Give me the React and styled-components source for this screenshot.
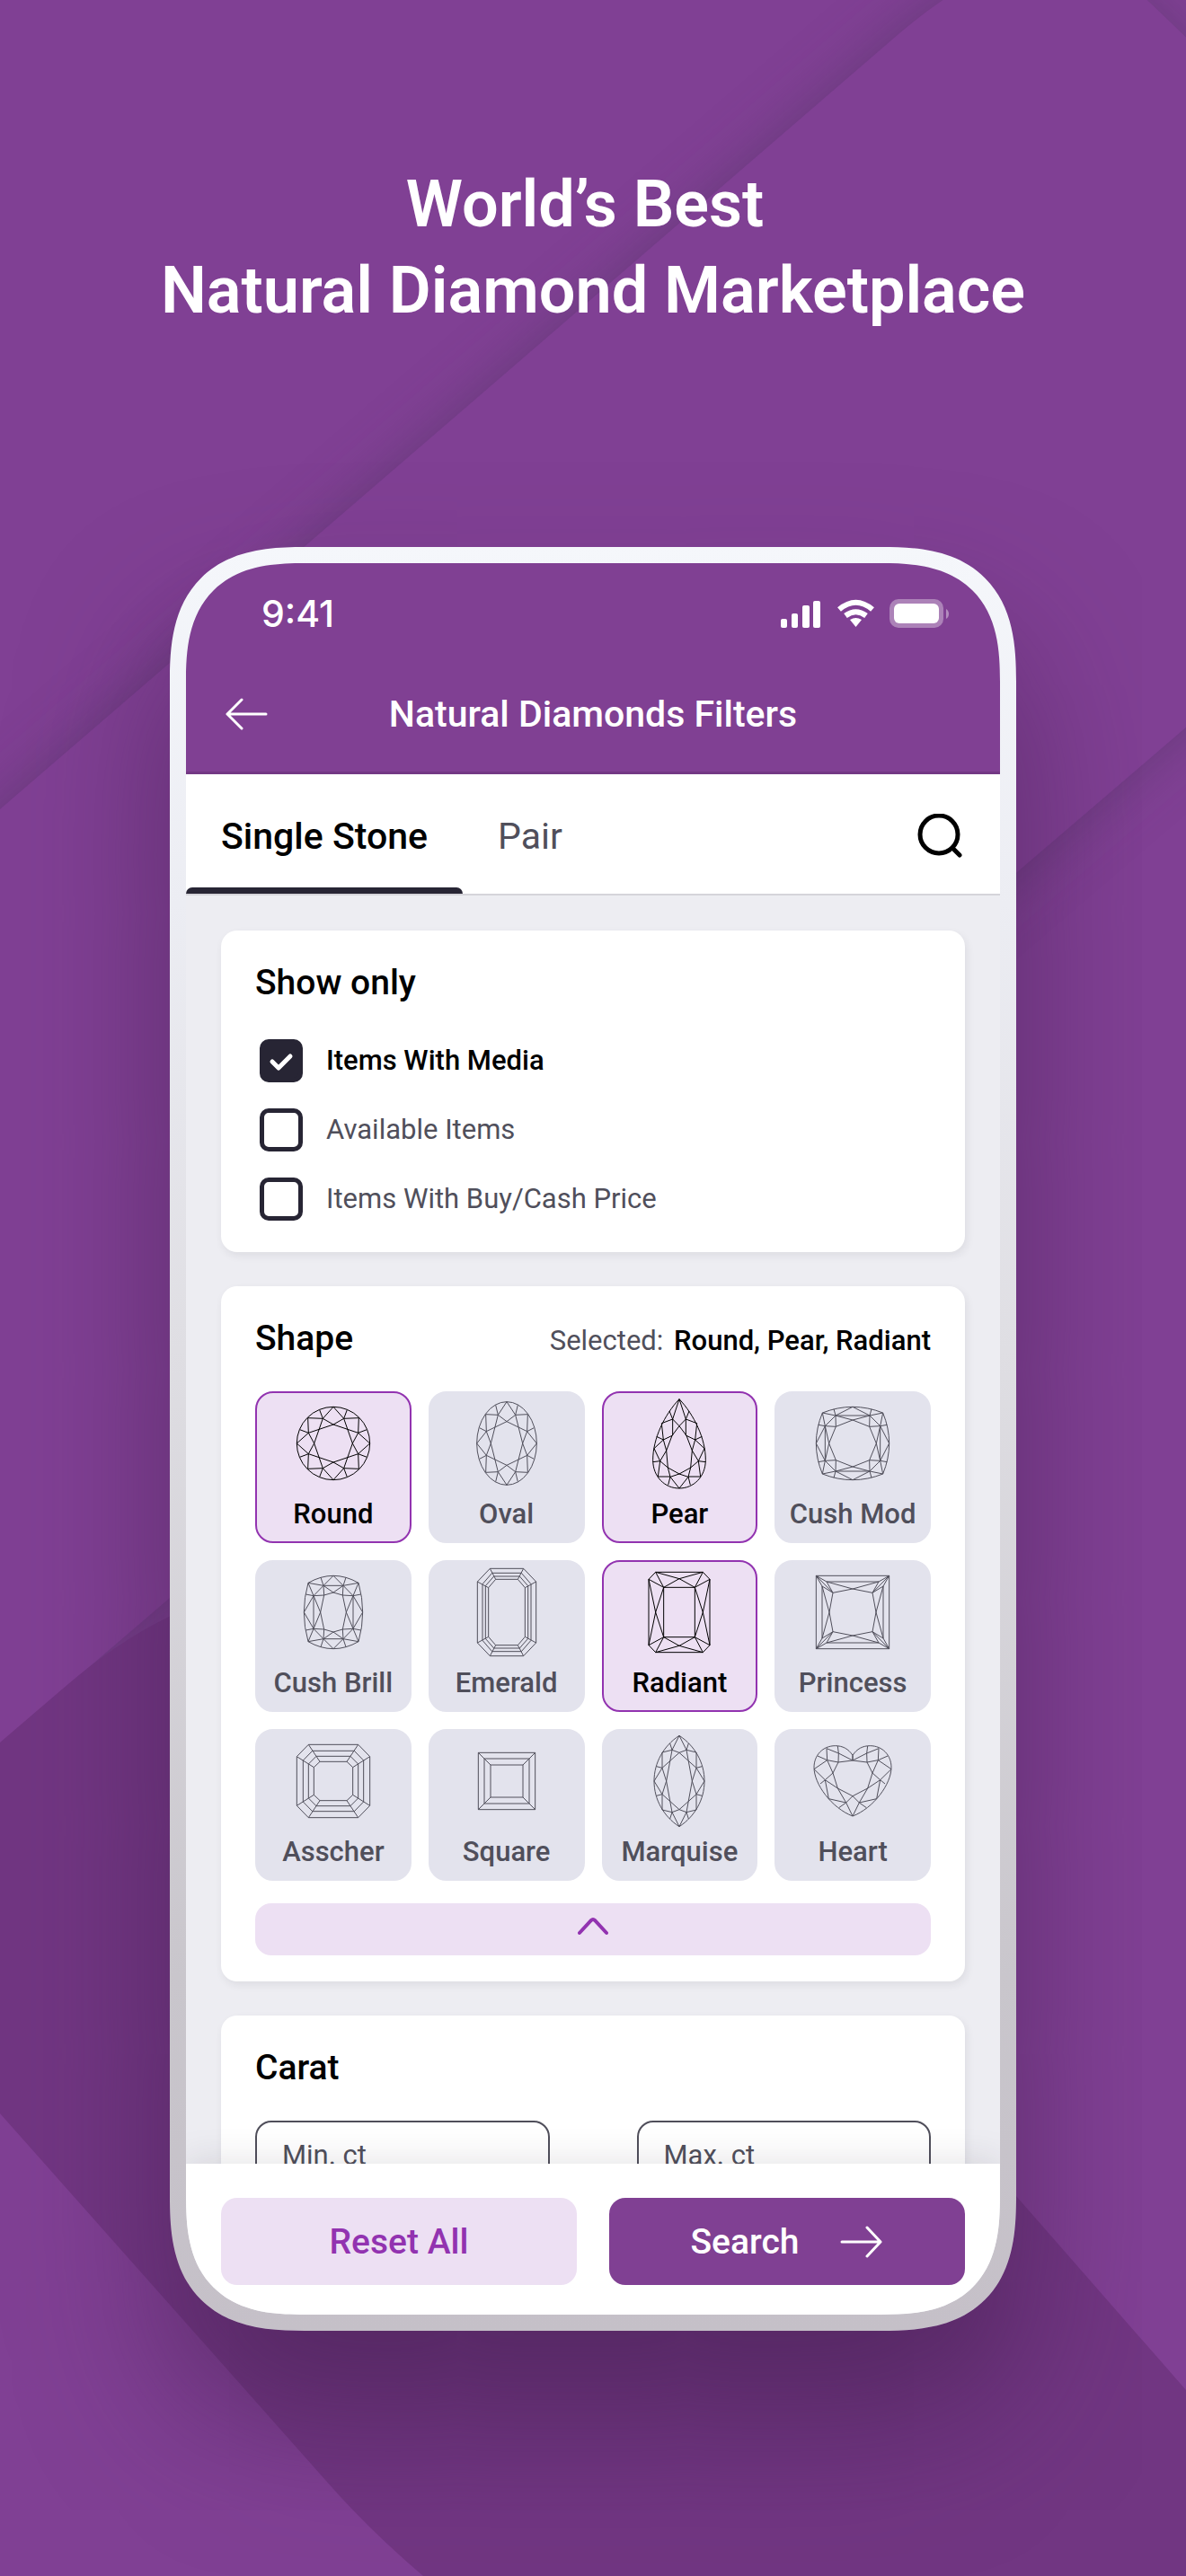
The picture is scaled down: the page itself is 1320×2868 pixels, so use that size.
import React, { useState } from "react";
import styled, { createGlobalStyle } from "styled-components";

const colors = {
  purple: "#804093",
  accent: "#9233b0",
  lilac: "#ede0f3",
  ink: "#272534",
  grey: "#504f5b",
  tile: "#e3e3ed",
  page: "#ededf2",
};

// one quarter of every symmetric cut, mirrored to all four corners
const cushion = (x, y, top, side) =>
  `M0 ${top}Q${x / 2} ${top} ${x} ${y}Q${side} ${y / 2} ${side} 0`;

const SHAPES = [
  {
    name: "Round",
    quarter:
      "M0 122A122 122 0 0 0 122 0M0 122L35 83L85 85L83 35L122 0M35 83L46 112M83 35L112 46M35 83L0 63L83 35M35 83L64 0L83 35",
  },
  {
    name: "Oval",
    quarter:
      "M0 139A100 139 0 0 0 100 0M0 139L29 95L70 97L68 40L100 0M29 95L37 128M68 40L91 52M29 95L0 73L68 40M29 95L53 0L68 40",
  },
  {
    name: "Pear",
    half:
      "M0-148C50-95 88-15 88 55C88 112 48 150 0 150M0-148L22-81L33-108M22-81L59-67L53-12L76-23M0-58L22-81V-27L53-12L84 17L64 59L88 62M0-58L24-26L43 24L53-12M43 24L64 59L71 111H30L37 139M64 59L38 81L0 102L30 112L0 150M43 24L38 81L30 112",
  },
  {
    name: "Cush Mod",
    quarter:
      cushion(101, 102, 122, 122) +
      "M0 122L57 93L101 102L92 58L122 0M57 93L63 115M92 58L115 62M57 93L92 58M0 93H57L56 56L92 58V0M57 93L0 78L56 56M92 58L79 0L56 56",
  },
  {
    name: "Cush Brill",
    quarter:
      cushion(84, 98, 122, 98) +
      "M0 122L33 89L84 98L66 55L98 0M33 89L42 116M66 55L92 60M33 89L66 55M0 89H33L31 57L66 55V0M33 89L0 66L31 57M66 55L43 0L31 57",
  },
  {
    name: "Emerald",
    quarter:
      "M0 146H56L98 102V0M0 131H49L81 94V0M0 120H43L71 88V0M0 110H37L61 82V0M56 146L37 110M98 102L61 82",
  },
  {
    name: "Radiant",
    quarter:
      "M0 134H79L102 110V0M0 83H52V0M0 112L79 134L52 83L102 110L79 0M0 112L52 83L79 0",
  },
  {
    name: "Princess",
    quarter:
      "M0 122H122V0M0 102H87L122 122L102 87V0M122 122L66 65L87 102L0 78L66 65L102 87L78 0L66 65",
  },
  {
    name: "Asscher",
    quarter:
      "M0 122H83L122 82V0M0 101H70L101 69V0M0 83H57L83 57V0M0 65H45L65 46V0M83 122L45 65M122 82L65 46",
  },
  { name: "Square", quarter: "M0 95H95V0M0 75H75V0M0 54H54V0M95 95L54 54" },
  {
    name: "Marquise",
    quarter:
      "M0 152C52 118 84 62 84 0M0 152L24 104L57 96V44L84 0M24 104L31 126M57 44L76 49M24 104L0 95L57 44M24 104L43 0L57 44",
  },
  {
    name: "Heart",
    half:
      "M0-86C14-108 34-118 58-118C100-118 129-86 129-46C129 10 70 90 0 117M0-86V-69L47-93L87-109L85-70L117-84M50-117L47-93L48-63M0-69L48-63L85-70L129-40L92-4L108 9M85-70L66-27L48-63M66-27L92-4L80 59L22 72L46 89M66-27L50 24L22 72L0 50L50 24L92-4M22 72L0 117",
  },
];

const TABS = ["Single Stone", "Pair"];

const FILTERS = ["Items With Media", "Available Items", "Items With Buy/Cash Price"];

const ShapeIcon = ({ quarter, half }) => (
  <Gem viewBox="-150 -168 300 336" aria-hidden="true">
    <path d={quarter || half} />
    <path d={quarter || half} transform="scale(-1 1)" />
    {quarter && <path d={quarter} transform="scale(1 -1)" />}
    {quarter && <path d={quarter} transform="scale(-1 -1)" />}
  </Gem>
);

const Backdrop = () => (
  <BackdropSvg viewBox="0 0 1320 2868" preserveAspectRatio="none" aria-hidden="true">
    <defs>
      <filter id="soft" x="-20%" y="-20%" width="140%" height="140%">
        <feGaussianBlur stdDeviation="32" />
      </filter>
    </defs>
    <rect width="1320" height="2868" fill="#804094" />
    <path
      d="M-300 1160L1000 38Q1160 -100 1290 16L1420 160Q1500 655 1320 810L0 1941Z"
      fill="#4d3560"
      opacity="0.5"
      filter="url(#soft)"
    />
    <path
      d="M-300 1160L1000 38Q1140 -82 1240 -34Q1300 20 1440 160V707L0 1941H-300Z"
      fill="#804094"
    />
    <path
      d="M0 1940L70 1880Q130 1828 188 1800Q500 1680 760 2020L1131 2445L1320 2661V2868H471Q410 2816 362 2761L0 2353Z"
      fill="#713682"
    />
  </BackdropSvg>
);

const App = () => {
  const [tab, setTab] = useState("Single Stone");
  const [checked, setChecked] = useState(["Items With Media"]);
  const [selected, setSelected] = useState(["Round", "Pear", "Radiant"]);

  const toggle = (list, item) =>
    list.includes(item) ? list.filter((i) => i !== item) : [...list, item];

  const selectedNames = SHAPES.map((s) => s.name).filter((n) => selected.includes(n));

  return (
    <Page>
      <GlobalStyle />
      <Backdrop />
      <Headline>
        {"World’s Best \nNatural Diamond Marketplace"}
      </Headline>

      <Phone>
        <Screen>
          <Header>
            <StatusBar>
              <span>9:41</span>
              <StatusIcons viewBox="0 0 188 32" aria-hidden="true">
                <rect x="0" y="22" width="7" height="10" rx="2" />
                <rect x="12" y="16" width="7" height="16" rx="2" />
                <rect x="24" y="7" width="8" height="25" rx="2" />
                <rect x="36" y="2" width="8" height="30" rx="2" />
                <path d="M77 23Q83.500 19 90 23L83.500 31Z" />
                <path className="arc" d="M72 18.500Q83.500 10 95 18.500" />
                <path className="arc" d="M65 11.500Q83.500 -4 102 11.500" />
                <rect x="121" y="0" width="60" height="32" rx="10" opacity="0.35" />
                <rect x="126" y="5" width="50" height="22" rx="6" />
                <path d="M184 11Q187 13 187 16.500T184 22Z" opacity="0.4" />
              </StatusIcons>
            </StatusBar>
            <TitleBar>
              <IconButton type="button" aria-label="Back">
                <LineIcon viewBox="0 0 48 36">
                  <path d="M46 18H3M19 2L3 18L19 34" />
                </LineIcon>
              </IconButton>
              <Title>Natural Diamonds Filters</Title>
            </TitleBar>
          </Header>

          <Tabs>
            {TABS.map((name) => (
              <Tab key={name} type="button" $active={tab === name} onClick={() => setTab(name)}>
                {name}
              </Tab>
            ))}
            <SearchButton type="button" aria-label="Search">
              <SearchIcon viewBox="0 0 50 50">
                <circle cx="24" cy="23" r="21" />
                <path d="M39 38L47 46" />
              </SearchIcon>
            </SearchButton>
          </Tabs>

          <Content>
            <Card>
              <CardTitle>Show only</CardTitle>
              <CheckList>
                {FILTERS.map((name) => (
                  <CheckRow key={name} $checked={checked.includes(name)}>
                    <CheckBox>
                      <input
                        type="checkbox"
                        checked={checked.includes(name)}
                        onChange={() => setChecked(toggle(checked, name))}
                      />
                      <svg viewBox="0 0 48 48">
                        <path d="M14 25L21 32L34 19" />
                      </svg>
                    </CheckBox>
                    {name}
                  </CheckRow>
                ))}
              </CheckList>
            </Card>

            <Card>
              <CardHead>
                <CardTitle>Shape</CardTitle>
                <Selected>
                  Selected: <strong>{selectedNames.join(", ")}</strong>
                </Selected>
              </CardHead>
              <ShapeGrid>
                {SHAPES.map((shape) => (
                  <Tile
                    key={shape.name}
                    type="button"
                    aria-pressed={selected.includes(shape.name)}
                    $active={selected.includes(shape.name)}
                    onClick={() => setSelected(toggle(selected, shape.name))}
                  >
                    <ShapeIcon {...shape} />
                    {shape.name}
                  </Tile>
                ))}
              </ShapeGrid>
              <Collapse type="button" aria-label="Show less">
                <svg viewBox="0 0 34 20">
                  <path d="M2 17L15 3Q17 1 19 3L32 17" />
                </svg>
              </Collapse>
            </Card>

            <Card>
              <CardTitle>Carat</CardTitle>
              <Range>
                <CaratInput placeholder="Min. ct" aria-label="Min. ct" />
                <CaratInput placeholder="Max. ct" aria-label="Max. ct" />
              </Range>
            </Card>
          </Content>

          <Footer>
            <Button type="button" onClick={() => setSelected([])}>
              Reset All
            </Button>
            <Button type="button" $primary>
              Search
              <LineIcon viewBox="0 0 48 36">
                <path d="M2 18H45M30 2L45 18L30 34" />
              </LineIcon>
            </Button>
          </Footer>
        </Screen>
      </Phone>
    </Page>
  );
};

const GlobalStyle = createGlobalStyle`
  * {
    box-sizing: border-box;
  }
  body {
    margin: 0;
    font-family: Roboto, "Liberation Sans", sans-serif;
  }
  button, input {
    font-family: inherit;
    margin: 0;
  }
  button {
    border: none;
    background: none;
    padding: 0;
    cursor: pointer;
  }
`;

const Page = styled.main`
  position: relative;
  height: 100vh;
  display: flex;
  flex-direction: column;
  padding: 180px 189px 273px;
  overflow: hidden;
`;

const BackdropSvg = styled.svg`
  position: absolute;
  inset: 0;
  width: 100%;
  height: 100%;
  z-index: -1;
`;

const Headline = styled.h1`
  margin: 0 -100px 237px;
  color: #fff;
  font-size: 72px;
  font-weight: 600;
  line-height: 96px;
  text-align: center;
  white-space: break-spaces;
`;

const Phone = styled.div`
  flex: 1;
  min-height: 0;
  padding: 18px;
  border-radius: 122px;
  background: linear-gradient(#f5f7fb, #ecedf3 20%, #dfdee3 45%, #c9c6cc 80%, #c5c0c8);
  box-shadow: 0 96px 160px rgba(66, 30, 78, 0.6);

  @supports (corner-shape: squircle) {
    border-radius: 150px;
    corner-shape: superellipse(1.4);
  }
`;

const Screen = styled.div`
  height: 100%;
  display: flex;
  flex-direction: column;
  overflow: hidden;
  border-radius: 104px;
  background: ${colors.page};

  @supports (corner-shape: squircle) {
    border-radius: 132px;
    corner-shape: superellipse(1.4);
  }
`;

const Header = styled.header`
  color: #fff;
  background: ${colors.purple};
  border-bottom: 3px solid #733884;
`;

const StatusBar = styled.div`
  display: flex;
  align-items: center;
  justify-content: space-between;
  height: 112px;
  padding: 0 56px 0 84px;
  font-family: Inter, sans-serif;
  font-size: 41px;
  font-weight: 500;
`;

const StatusIcons = styled.svg`
  width: 188px;
  height: 32px;
  fill: #fff;

  .arc {
    fill: none;
    stroke: #fff;
    stroke-width: 6;
  }
`;

const TitleBar = styled.div`
  display: grid;
  grid-template-columns: 1fr auto 1fr;
  align-items: center;
  height: 120px;
  padding: 0 43px 8px;
`;

const IconButton = styled.button`
  justify-self: start;
  display: flex;
`;

const LineIcon = styled.svg`
  width: 48px;
  height: 36px;
  fill: none;
  stroke: #fff;
  stroke-width: 3;
  stroke-linecap: round;
  stroke-linejoin: round;
`;

const Title = styled.h2`
  margin: 0;
  font-size: 41px;
  font-weight: 500;
`;

const Tabs = styled.nav`
  display: flex;
  height: 135px;
  background: #fff;
  border-bottom: 2px solid #d5d4da;
`;

const Tab = styled.button`
  position: relative;
  padding: 4px 39px 0;
  font-size: 41px;
  font-weight: ${({ $active }) => ($active ? 500 : 400)};
  color: ${({ $active }) => ($active ? "#000" : colors.grey)};

  &::after {
    content: "";
    display: ${({ $active }) => ($active ? "block" : "none")};
    position: absolute;
    inset: auto 0 0;
    height: 7px;
    border-radius: 8px 8px 0 0;
    background: ${colors.ink};
  }
`;

const SearchButton = styled.button`
  display: flex;
  align-items: center;
  margin-left: auto;
  padding: 4px 42px 0 0;
`;

const SearchIcon = styled.svg`
  width: 50px;
  height: 50px;
  fill: none;
  stroke: #000;
  stroke-width: 5;
  stroke-linecap: round;
`;

const Content = styled.div`
  flex: 1;
  min-height: 0;
  display: flex;
  flex-direction: column;
  gap: 38px;
  padding: 39px;
  overflow-y: auto;
  scrollbar-width: none;
`;

const Card = styled.section`
  flex: none;
  padding: 38px 38px 29px;
  border-radius: 18px;
  background: #fff;
  box-shadow: 2px 4px 10px rgba(39, 37, 52, 0.08);
`;

const CardHead = styled.div`
  display: flex;
  align-items: baseline;
  justify-content: space-between;
`;

const CardTitle = styled.h3`
  margin: 0;
  font-size: 39px;
  font-weight: 500;
  line-height: 40px;
`;

const CheckList = styled.div`
  display: grid;
  gap: 29px;
  padding: 43px 5px 6px;
`;

const CheckRow = styled.label`
  display: flex;
  align-items: center;
  gap: 26px;
  font-size: 31px;
  font-weight: ${({ $checked }) => ($checked ? 500 : 400)};
  line-height: 48px;
  color: ${({ $checked }) => ($checked ? "#000" : colors.grey)};
`;

const CheckBox = styled.span`
  display: grid;

  input,
  svg {
    grid-area: 1 / 1;
    width: 48px;
    height: 48px;
  }
  input {
    appearance: none;
    margin: 0;
    border: 5px solid ${colors.ink};
    border-radius: 10px;
    background: #fff;
  }
  input:checked {
    background: ${colors.ink};
  }
  svg {
    pointer-events: none;
    fill: none;
    stroke: #fff;
    stroke-width: 5;
    stroke-linecap: round;
    stroke-linejoin: round;
  }
`;

const Selected = styled.p`
  margin: 0;
  font-size: 31px;
  line-height: 32px;
  color: ${colors.grey};

  strong {
    margin-left: 4px;
    font-weight: 500;
    color: #000;
  }
`;

const ShapeGrid = styled.div`
  display: grid;
  grid-template-columns: repeat(4, 1fr);
  gap: 19px;
  margin: 39px 0 25px;
`;

const Gem = styled.svg`
  width: 100px;
  height: 112px;
  fill: none;
  stroke: currentColor;
  stroke-width: 3;
  stroke-linejoin: round;
`;

const Tile = styled.button`
  display: flex;
  flex-direction: column;
  align-items: center;
  height: 169px;
  border: 2px solid ${({ $active }) => ($active ? colors.accent : colors.tile)};
  border-radius: 20px;
  background: ${({ $active }) => ($active ? colors.lilac : colors.tile)};
  color: ${({ $active }) => ($active ? "#000" : colors.grey)};
  font-size: 31px;
  font-weight: 500;
  line-height: 46px;
  white-space: nowrap;
`;

const Collapse = styled.button`
  display: flex;
  justify-content: center;
  width: 100%;
  height: 58px;
  padding-top: 16px;
  border-radius: 18px;
  background: ${colors.lilac};

  svg {
    width: 34px;
    height: 20px;
    fill: none;
    stroke: ${colors.accent};
    stroke-width: 4;
    stroke-linecap: round;
  }
`;

const Range = styled.div`
  display: grid;
  grid-template-columns: 1fr 1fr;
  gap: 97px;
  margin-top: 39px;
`;

const CaratInput = styled.input`
  width: 100%;
  height: 76px;
  padding: 0 28px;
  border: 2px solid ${colors.grey};
  border-radius: 18px;
  font-size: 31px;

  &::placeholder {
    color: ${colors.grey};
    opacity: 1;
  }
`;

const Footer = styled.footer`
  position: relative;
  display: grid;
  grid-template-columns: 1fr 1fr;
  gap: 36px;
  padding: 38px 39px 33px;
  background: #fff;
  box-shadow: 0 0 40px rgba(39, 37, 52, 0.14);
`;

const Button = styled.button`
  display: flex;
  align-items: center;
  justify-content: center;
  gap: 46px;
  height: 97px;
  border-radius: 18px;
  font-size: 39px;
  font-weight: 500;
  color: ${({ $primary }) => ($primary ? "#fff" : colors.accent)};
  background: ${({ $primary }) => ($primary ? colors.purple : colors.lilac)};
`;

export default App;
